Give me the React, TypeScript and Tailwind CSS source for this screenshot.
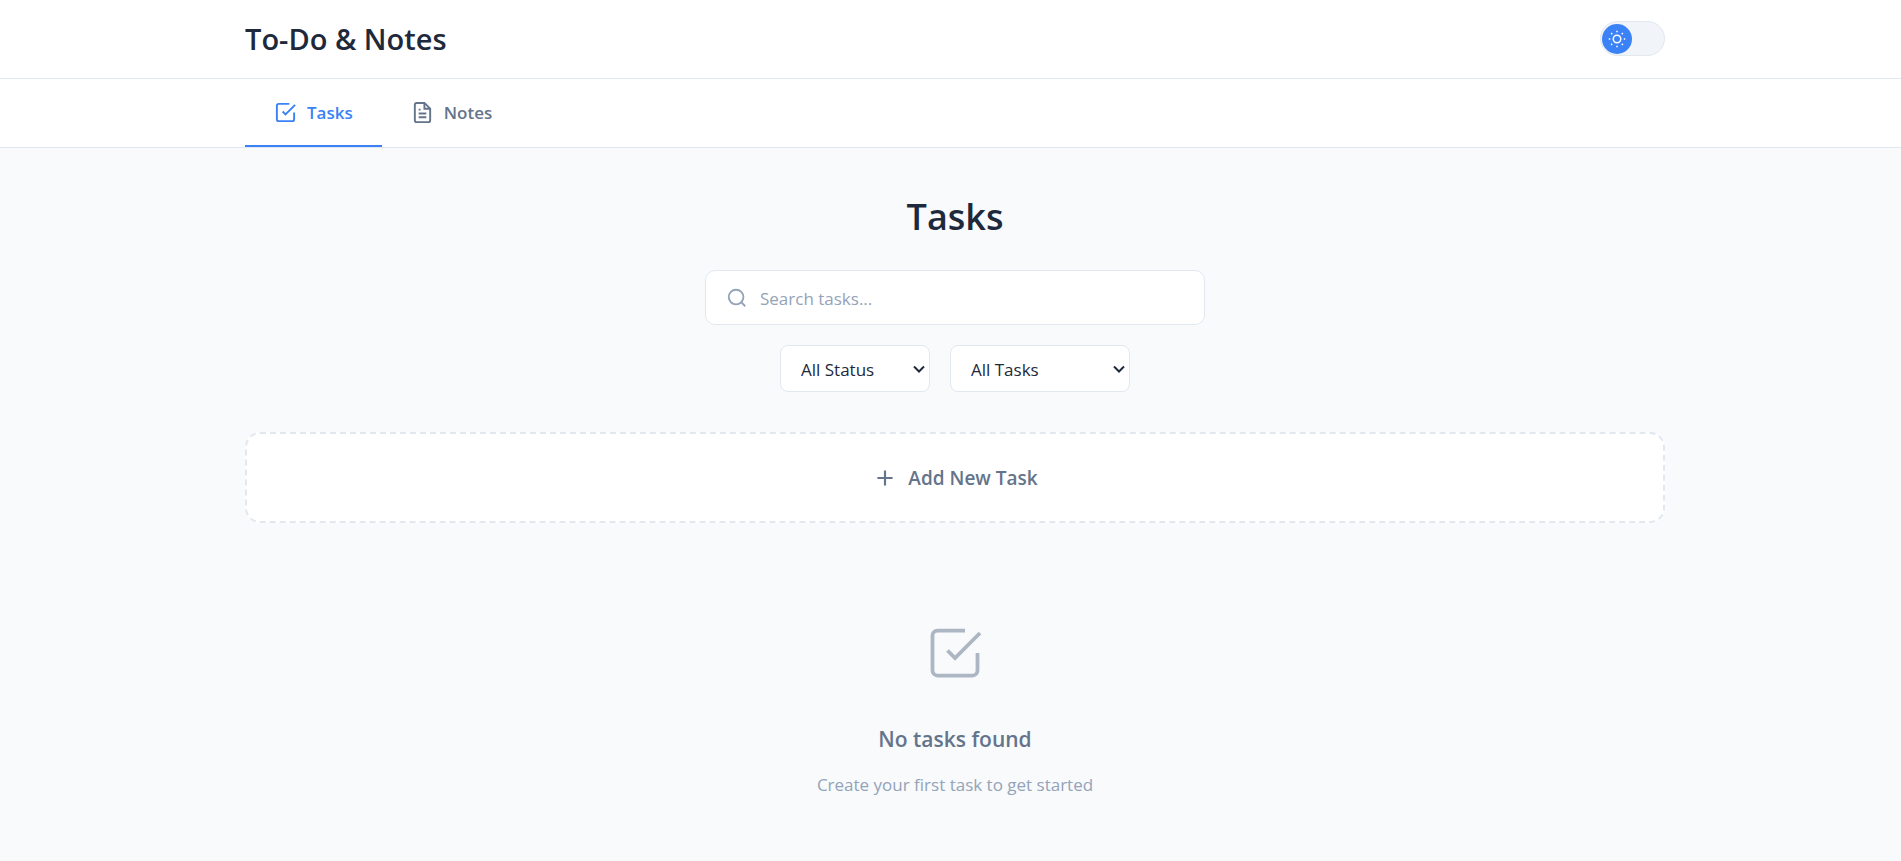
import { useState } from "react";
import type { ReactNode } from "react";

function Icon({ className, children }: { className: string; children: ReactNode }) {
  return (
    <svg viewBox="0 0 24 24" fill="none" stroke="currentColor" aria-hidden="true" className={className}>
      {children}
    </svg>
  );
}

const checkSquare = (
  <>
    <path d="M9 11l3 3L22 4" />
    <path d="M21 12v7a2 2 0 0 1-2 2H5a2 2 0 0 1-2-2V5a2 2 0 0 1 2-2h11" />
  </>
);

const fileText = (
  <>
    <path d="M14 2H6a2 2 0 0 0-2 2v16a2 2 0 0 0 2 2h12a2 2 0 0 0 2-2V8z" />
    <path d="M14 2v6h6" />
    <path d="M16 13H8M16 17H8M10 9H8" />
  </>
);

const tabs = [
  { id: "tasks", label: "Tasks", icon: checkSquare },
  { id: "notes", label: "Notes", icon: fileText },
];

const container = "mx-auto w-full max-w-[1420px]";

function Filter({ label, width, options }: { label: string; width: string; options: string[] }) {
  return (
    <div className={`relative ${width}`}>
      <select
        aria-label={label}
        className="h-[47px] w-full appearance-none rounded-lg border border-[#e2e8f0] bg-white px-5 pt-0.5 text-[17px]"
      >
        {options.map((o) => (
          <option key={o}>{o}</option>
        ))}
      </select>
      <svg
        viewBox="0 0 12 8"
        fill="none"
        stroke="currentColor"
        aria-hidden="true"
        className="pointer-events-none absolute inset-y-0 right-[5px] my-auto h-2 w-3 stroke-2"
      >
        <path d="M1 1.5l5 5 5-5" />
      </svg>
    </div>
  );
}

export default function App() {
  const [tab, setTab] = useState("tasks");

  return (
    <div className="min-h-screen bg-[#f8fafc] font-['Open_Sans','Noto_Sans',sans-serif] text-[#1e293b]">
      <header className="border-b border-[#e2e8f0] bg-white pl-[9px]">
        <div className={`${container} flex h-[78px] items-center justify-between`}>
          <h1 className="text-[29px] leading-9 font-semibold">To-Do &amp; Notes</h1>
          <button
            type="button"
            aria-label="Toggle theme"
            className="mb-px flex h-[35px] w-[65px] items-center rounded-full border border-[#e2e8f0] bg-[#f1f5f9] p-px"
          >
            <span className="flex size-[30px] items-center justify-center rounded-full bg-[#3b82f6] text-white">
              <Icon className="size-[18px] stroke-2">
                <circle cx="12" cy="12" r="5" />
                <path d="M12 1v2M12 21v2M4.2 4.2l1.4 1.4M18.4 18.4l1.4 1.4M1 12h2M21 12h2M4.2 19.8l1.4-1.4M18.4 5.6l1.4-1.4" />
              </Icon>
            </span>
          </button>
        </div>
      </header>

      <nav className="border-b border-[#e2e8f0] bg-white pl-[9px]">
        <div className={`${container} flex`}>
          {tabs.map((t) => (
            <button
              key={t.id}
              type="button"
              onClick={() => setTab(t.id)}
              className={`flex h-[68px] items-center gap-2.5 border-b-2 px-[29px] text-[17px] font-semibold ${
                tab === t.id ? "border-[#3b82f6] text-[#3b82f6]" : "border-transparent text-[#64748b]"
              }`}
            >
              <Icon className="size-[23px] stroke-2">{t.icon}</Icon>
              <span className="pt-0.5">{t.label}</span>
            </button>
          ))}
        </div>
      </nav>

      <main className="pl-[9px]">
        <div className={`${container} flex flex-col items-center pt-10`}>
          <h2 className="text-[36px] leading-[58px] font-semibold">Tasks</h2>

          <label className="mt-6 flex h-[55px] w-full max-w-[500px] items-center gap-3 rounded-[10px] border border-[#e2e8f0] bg-white px-5 text-[#94a3b8]">
            <Icon className="size-[22px] stroke-2">
              <circle cx="11" cy="11" r="8" />
              <path d="M21 21l-4.35-4.35" />
            </Icon>
            <input
              type="text"
              aria-label="Search tasks"
              placeholder="Search tasks..."
              className="min-w-0 flex-1 pt-0.5 text-[17px] text-[#1e293b] outline-none placeholder:text-[#94a3b8]"
            />
          </label>

          <div className="mt-5 flex gap-5">
            <Filter label="Status" width="w-[150px]" options={["All Status", "Active", "Completed"]} />
            <Filter label="Task filter" width="w-[180px]" options={["All Tasks", "High Priority"]} />
          </div>

          <button
            type="button"
            className="mt-10 flex h-[91px] w-full items-center justify-center gap-2.5 rounded-[15px] border-2 border-dashed border-[#e2e8f0] bg-white text-[19px] font-semibold text-[#64748b]"
          >
            <Icon className="size-[26px] stroke-2">
              <path d="M12 5v14M5 12h14" />
            </Icon>
            <span className="pt-0.5">Add New Task</span>
          </button>

          <section className="flex flex-col items-center pt-[100px] text-center">
            <Icon className="size-[60px] stroke-[1.5] opacity-50 text-[#64748b]">{checkSquare}</Icon>
            <h3 className="mt-10 text-[21px] leading-8 font-semibold text-[#64748b]">No tasks found</h3>
            <p className="mt-4 text-[17px] leading-7 text-[#94a3b8]">Create your first task to get started</p>
          </section>
        </div>
      </main>
    </div>
  );
}
